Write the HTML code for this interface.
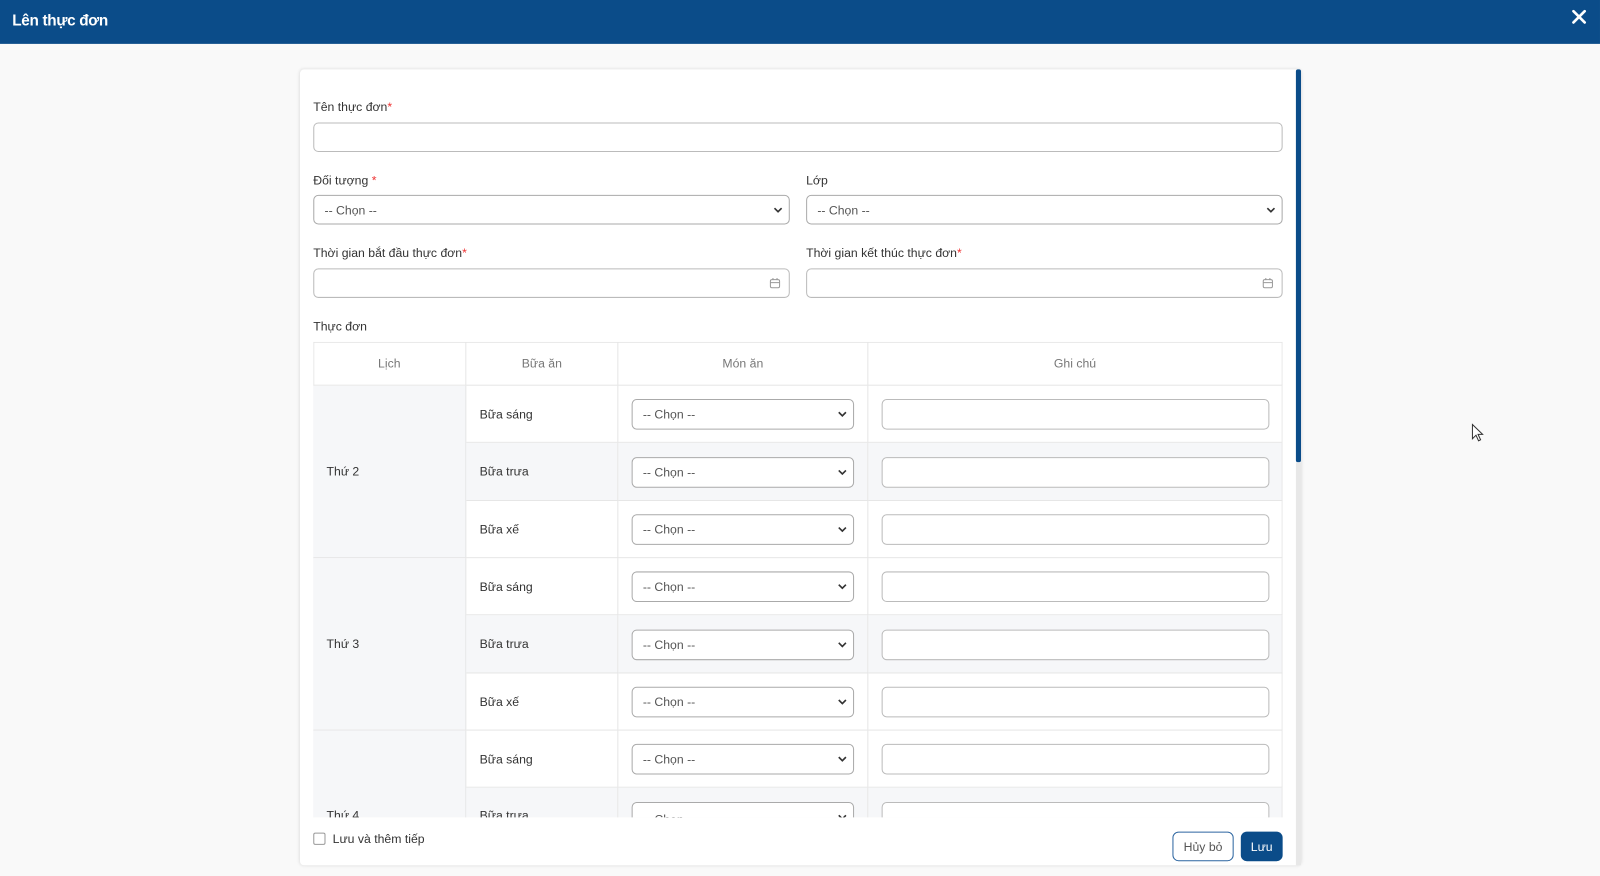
<!DOCTYPE html>
<html><head><meta charset="utf-8"><style>
*{box-sizing:border-box;margin:0;padding:0}
body{width:1600px;height:875px;background:#f9f9f9;font-family:"Liberation Sans",sans-serif;position:relative;overflow:hidden;color:#333}
#w{position:absolute;left:0;top:0;width:1568px;height:858px;transform:scale(1.0204);transform-origin:0 0}
.hdr{position:absolute;left:0;top:0;width:1568px;height:43px;background:#0b4c89;color:#fff}
.hdr .t{position:absolute;left:12px;top:12px;font-size:15px;font-weight:bold;letter-spacing:-0.3px}
.card{position:absolute;left:294px;top:68px;width:981px;height:780px;background:#fff;border-radius:4px;box-shadow:0 0 3px rgba(0,0,0,.12)}
.a{position:absolute}
.lbl{font-size:12px;color:#333}
.req{color:#e33}
.inp{position:absolute;border:1px solid #bbb;border-radius:5px;background:#fff}
.sel{position:absolute;border:1px solid #aaa;border-radius:5px;background:#fff;font-size:12px;color:#555;padding-left:10px;display:flex;align-items:center}
.sel svg{position:absolute;right:6px;top:50%;margin-top:-3px}
.cal{position:absolute;right:8px;top:8px}
.tbl{position:absolute;left:307px;top:335px;width:950px;height:466px;overflow:hidden}
.c{position:absolute;border-right:1px solid #e6e6e6;border-bottom:1px solid #e6e6e6;font-size:12px;display:flex;align-items:center}
.h{color:#777;justify-content:center}
.g{background:#f6f7f9}
</style></head><body><div id="w">
<div class="hdr"><div class="t">Lên thực đơn</div>
<svg class="a" style="left:1540px;top:9px" width="15" height="15" viewBox="0 0 15 15"><path d="M2 2L13 13M13 2L2 13" stroke="#fff" stroke-width="2.6" stroke-linecap="round"/></svg></div>
<div class="card"></div>
<div class="a" style="left:1270px;top:68px;width:5px;height:385px;background:#0b4c89;border-radius:2px"></div>
<div class="a" style="left:1270px;top:453px;width:5px;height:395px;background:#e8e8e8"></div>

<div class="a lbl" style="left:307px;top:98px">Tên thực đơn<span class="req">*</span></div>
<div class="inp" style="left:307px;top:120px;width:950px;height:29px"></div>

<div class="a lbl" style="left:307px;top:170px">Đối tượng <span class="req">*</span></div>
<div class="sel" style="left:307px;top:191px;width:467px;height:29px">-- Chọn --<svg width="9" height="6"><path d="M1 1l3.5 3.5L8 1" stroke="#333" stroke-width="1.6" fill="none"/></svg></div>
<div class="a lbl" style="left:790px;top:170px">Lớp</div>
<div class="sel" style="left:790px;top:191px;width:467px;height:29px">-- Chọn --<svg width="9" height="6"><path d="M1 1l3.5 3.5L8 1" stroke="#333" stroke-width="1.6" fill="none"/></svg></div>

<div class="a lbl" style="left:307px;top:241px">Thời gian bắt đầu thực đơn<span class="req">*</span></div>
<div class="inp" style="left:307px;top:263px;width:467px;height:29px"><svg class="cal" width="11" height="11"><rect x="1" y="2" width="9" height="8" rx="1.5" fill="none" stroke="#999"/><path d="M1 5h9M3.5 0.5v2M7.5 0.5v2" stroke="#999"/></svg></div>
<div class="a lbl" style="left:790px;top:241px">Thời gian kết thúc thực đơn<span class="req">*</span></div>
<div class="inp" style="left:790px;top:263px;width:467px;height:29px"><svg class="cal" width="11" height="11"><rect x="1" y="2" width="9" height="8" rx="1.5" fill="none" stroke="#999"/><path d="M1 5h9M3.5 0.5v2M7.5 0.5v2" stroke="#999"/></svg></div>

<div class="a lbl" style="left:307px;top:313px">Thực đơn</div>

<div class="tbl">
<div style="position:absolute;left:0;top:0;width:950px;height:1px;background:#e6e6e6"></div>
<div style="position:absolute;left:0;top:0;width:1px;height:466px;background:#e6e6e6"></div>
<div class="c h" style="left:0;top:0;width:150px;height:43px">Lịch</div>
<div class="c h" style="left:150px;top:0;width:149px;height:43px">Bữa ăn</div>
<div class="c h" style="left:299px;top:0;width:245px;height:43px">Món ăn</div>
<div class="c h" style="left:544px;top:0;width:406px;height:43px">Ghi chú</div>

<div class="c g" style="left:0;top:43px;width:150px;height:169px;padding-left:13px">Thứ 2</div>
<div class="c g" style="left:0;top:212px;width:150px;height:169px;padding-left:13px">Thứ 3</div>
<div class="c g" style="left:0;top:381px;width:150px;height:169px;padding-left:13px;align-items:flex-start;padding-top:76px">Thứ 4</div>

<div class="c" style="left:150px;top:43px;width:149px;height:56px;padding-left:13px">Bữa sáng</div><div class="c" style="left:299px;top:43px;width:245px;height:56px"></div><div class="c" style="left:544px;top:43px;width:406px;height:56px"></div>
<div class="c g" style="left:150px;top:99px;width:149px;height:57px;padding-left:13px">Bữa trưa</div><div class="c g" style="left:299px;top:99px;width:245px;height:57px"></div><div class="c g" style="left:544px;top:99px;width:406px;height:57px"></div>
<div class="c" style="left:150px;top:156px;width:149px;height:56px;padding-left:13px">Bữa xế</div><div class="c" style="left:299px;top:156px;width:245px;height:56px"></div><div class="c" style="left:544px;top:156px;width:406px;height:56px"></div>
<div class="c" style="left:150px;top:212px;width:149px;height:56px;padding-left:13px">Bữa sáng</div><div class="c" style="left:299px;top:212px;width:245px;height:56px"></div><div class="c" style="left:544px;top:212px;width:406px;height:56px"></div>
<div class="c g" style="left:150px;top:268px;width:149px;height:57px;padding-left:13px">Bữa trưa</div><div class="c g" style="left:299px;top:268px;width:245px;height:57px"></div><div class="c g" style="left:544px;top:268px;width:406px;height:57px"></div>
<div class="c" style="left:150px;top:325px;width:149px;height:56px;padding-left:13px">Bữa xế</div><div class="c" style="left:299px;top:325px;width:245px;height:56px"></div><div class="c" style="left:544px;top:325px;width:406px;height:56px"></div>
<div class="c" style="left:150px;top:381px;width:149px;height:56px;padding-left:13px">Bữa sáng</div><div class="c" style="left:299px;top:381px;width:245px;height:56px"></div><div class="c" style="left:544px;top:381px;width:406px;height:56px"></div>
<div class="c g" style="left:150px;top:437px;width:149px;height:57px;padding-left:13px;align-items:flex-start;padding-top:20px">Bữa trưa</div><div class="c g" style="left:299px;top:437px;width:245px;height:57px"></div><div class="c g" style="left:544px;top:437px;width:406px;height:57px"></div>

<div class="sel" style="left:312px;top:56px;width:218px;height:30px">-- Chọn --<svg width="9" height="6"><path d="M1 1l3.5 3.5L8 1" stroke="#333" stroke-width="1.6" fill="none"/></svg></div><div class="inp" style="left:557px;top:56px;width:380px;height:30px"></div>
<div class="sel" style="left:312px;top:113px;width:218px;height:30px">-- Chọn --<svg width="9" height="6"><path d="M1 1l3.5 3.5L8 1" stroke="#333" stroke-width="1.6" fill="none"/></svg></div><div class="inp" style="left:557px;top:113px;width:380px;height:30px"></div>
<div class="sel" style="left:312px;top:169px;width:218px;height:30px">-- Chọn --<svg width="9" height="6"><path d="M1 1l3.5 3.5L8 1" stroke="#333" stroke-width="1.6" fill="none"/></svg></div><div class="inp" style="left:557px;top:169px;width:380px;height:30px"></div>
<div class="sel" style="left:312px;top:225px;width:218px;height:30px">-- Chọn --<svg width="9" height="6"><path d="M1 1l3.5 3.5L8 1" stroke="#333" stroke-width="1.6" fill="none"/></svg></div><div class="inp" style="left:557px;top:225px;width:380px;height:30px"></div>
<div class="sel" style="left:312px;top:282px;width:218px;height:30px">-- Chọn --<svg width="9" height="6"><path d="M1 1l3.5 3.5L8 1" stroke="#333" stroke-width="1.6" fill="none"/></svg></div><div class="inp" style="left:557px;top:282px;width:380px;height:30px"></div>
<div class="sel" style="left:312px;top:338px;width:218px;height:30px">-- Chọn --<svg width="9" height="6"><path d="M1 1l3.5 3.5L8 1" stroke="#333" stroke-width="1.6" fill="none"/></svg></div><div class="inp" style="left:557px;top:338px;width:380px;height:30px"></div>
<div class="sel" style="left:312px;top:394px;width:218px;height:30px">-- Chọn --<svg width="9" height="6"><path d="M1 1l3.5 3.5L8 1" stroke="#333" stroke-width="1.6" fill="none"/></svg></div><div class="inp" style="left:557px;top:394px;width:380px;height:30px"></div>
<div class="sel" style="left:312px;top:451px;width:218px;height:30px;align-items:flex-start;padding-top:9px">-- Chọn --<svg width="9" height="6"><path d="M1 1l3.5 3.5L8 1" stroke="#333" stroke-width="1.6" fill="none"/></svg></div><div class="inp" style="left:557px;top:451px;width:380px;height:30px"></div>
</div>

<div class="a" style="left:307px;top:816px;width:12px;height:12px;border:1px solid #999;border-radius:2px;background:#fff"></div>
<div class="a lbl" style="left:326px;top:815px">Lưu và thêm tiếp</div>
<div class="a" style="left:1149px;top:815px;width:60px;height:29px;border:1px solid #2c65a0;border-radius:6px;color:#555;font-size:12px;display:flex;align-items:center;justify-content:center">Hủy bỏ</div>
<div class="a" style="left:1216px;top:815px;width:41px;height:29px;background:#0b4c89;border-radius:6px;color:#fff;font-size:12px;display:flex;align-items:center;justify-content:center">Lưu</div>

<svg class="a" style="left:1442px;top:415px" width="12" height="18" viewBox="0 0 12 18"><path d="M1 1v14l3.5-3.5 2.5 5.5 2-1-2.5-5.3H11z" fill="#fff" stroke="#333" stroke-width="1"/></svg>
</div></body></html>
